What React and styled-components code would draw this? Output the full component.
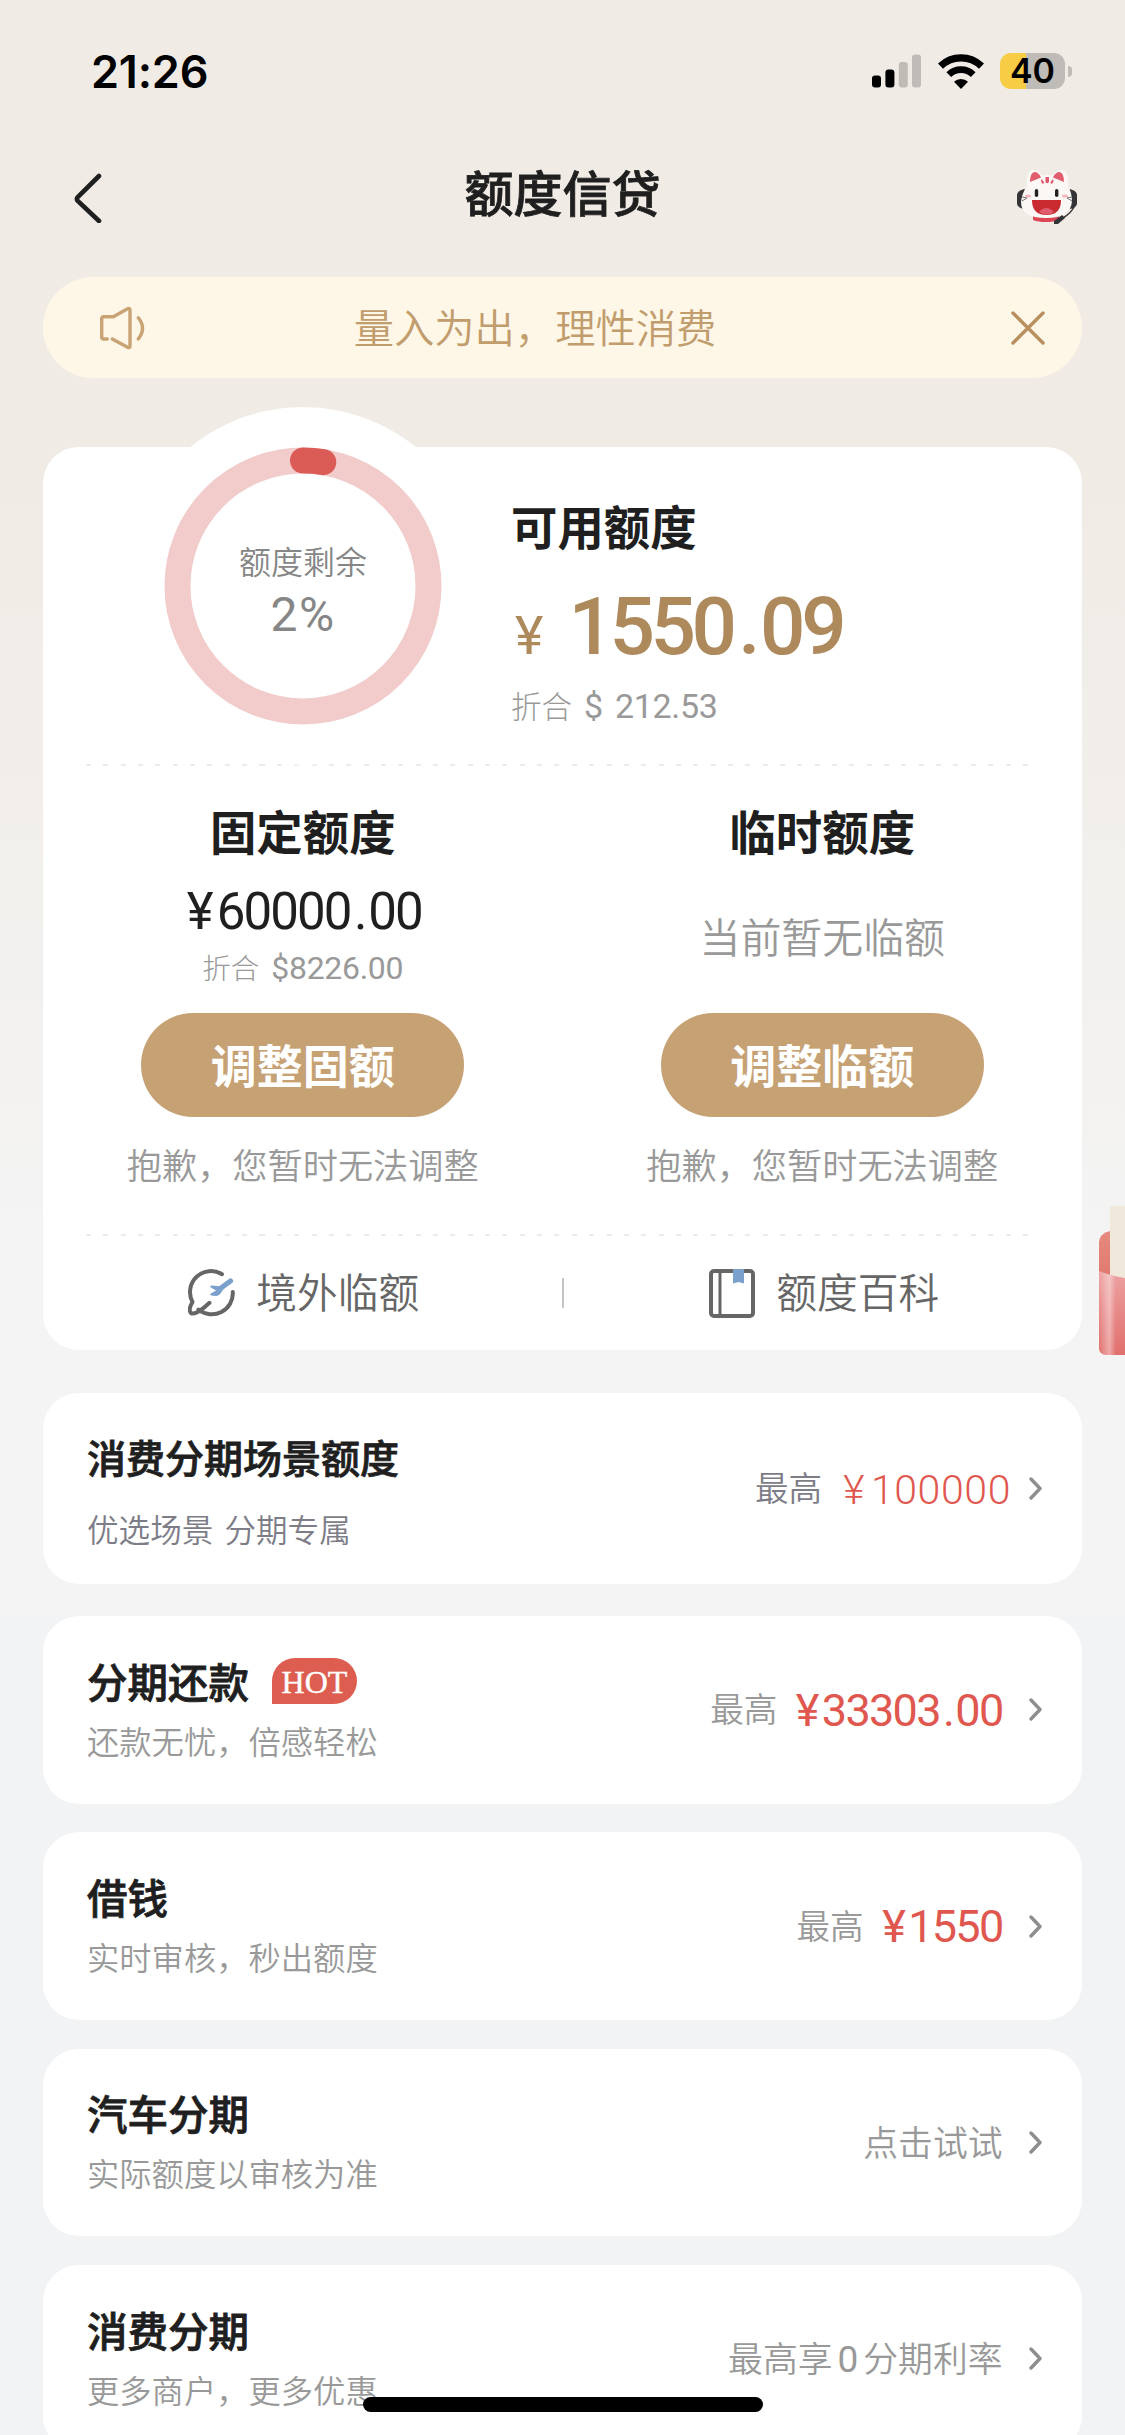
import { Fragment } from 'react';

import styled, { createGlobalStyle } from 'styled-components';

const GlobalStyle = createGlobalStyle`
  * {
    box-sizing: border-box;
  }

  body {
    margin: 0;
    background: #f2f3f5;
    font-family: 'Noto Sans CJK SC', sans-serif;
    font-weight: 350;
  }
`;

const Screen = styled.div`
  position: relative;
  width: 1125px;
  height: 2435px;
  overflow: hidden;
  background: linear-gradient(#f0ebe5 0, #f0ebe5 500px, #f4f4f4 1250px, #f4f4f4 1616px, #f2f3f5 1616px);
`;

const StatusBar = styled.div`
  display: flex;
  align-items: center;
  justify-content: space-between;
  height: 144px;
  padding: 0 53px 2px 91px;
`;

const Clock = styled.span`
  font: 600 45px/1 Inter, sans-serif;
  letter-spacing: -0.2px;
  color: #000;
`;

const StatusIcons = styled.div`
  display: flex;
  align-items: center;
  height: 36px;
`;

const WifiSlot = styled.span`
  display: flex;
  margin-left: 16px;
`;

const Battery = styled.div`
  display: flex;
  align-items: center;
  justify-content: center;
  width: 65px;
  height: 36px;
  margin-left: 15px;
  border-radius: 11px;
  background: linear-gradient(90deg, #f7cd46 40%, #bfbcb7 40%);
  font: 600 34px/1 Inter, sans-serif;
  color: #000;
`;

const BatteryCap = styled.i`
  width: 4px;
  height: 11px;
  margin-left: 3px;
  border-radius: 0 5px 5px 0;
  background: #bfbcb7;
`;

const NavBar = styled.header`
  display: grid;
  grid-template-columns: 60px 1fr 60px;
  align-items: center;
  height: 106px;
  margin-bottom: 27px;
  padding: 0 48px 0 74px;
  svg {
    display: block;
  }
`;

const NavTitle = styled.h1`
  margin: -12px 0 0 0;
  padding-right: 26px;
  text-align: center;
  font-size: 49px;
  line-height: 60px;
  font-weight: 500;
  color: #1f1f1f;
  -webkit-text-stroke: 0.8px #1f1f1f;
`;

const Notice = styled.div`
  display: flex;
  align-items: center;
  justify-content: space-between;
  height: 101px;
  margin: 0 43px 69px;
  padding: 0 37px 0 56px;
  border-radius: 51px;
  background: #fef7e8;
  font-size: 40.3px;
  color: #c19c6c;
`;

const NoticeText = styled.span`
  margin: 0 88px 4px 0;
`;

const QuotaCard = styled.section`
  position: relative;
  display: flex;
  flex-direction: column;
  height: 903px;
  margin: 0 43px 43px;
  border-radius: 36px;
  background: #fff;
`;

const Overview = styled.div`
  display: grid;
  grid-template-columns: 468px 1fr;
  height: 317px;
`;

const GaugeWrap = styled.div`
  position: relative;
  display: flex;
  flex-direction: column;
  align-items: center;
  justify-content: center;
  width: 358px;
  height: 358px;
  margin: -40px 0 0 81px;
  border-radius: 50%;
  background: #fff;
  svg {
    position: absolute;
    inset: 0;
  }
`;

const GaugeLabel = styled.span`
  margin-top: 6px;
  font-size: 32px;
  line-height: 48px;
  color: #868686;
`;

const GaugeValue = styled.span`
  margin-top: 3px;
  font: 400 48px/56px Roboto, sans-serif;
  letter-spacing: 1.5px;
  color: #868686;
`;

const Available = styled.div`
  display: flex;
  flex-direction: column;
  padding-top: 47px;
`;

const Heading = styled.h2`
  margin: 0;
  font-size: 46.4px;
  line-height: 62px;
  font-weight: 700;
  color: #1f1f1f;
`;

const Dot = styled.span`
  margin: 0 0.05em 0 0.07em;
`;

const BigAmount = styled.div`
  display: flex;
  align-items: baseline;
  height: 94px;
  margin-top: 24px;
  padding-left: 4px;
  gap: 25px;
  font: 500 80px/94px Roboto, sans-serif;
  letter-spacing: -4.4px;
  color: #ad895c;
  small {
    font-size: 54px;
    font-weight: 400;
    letter-spacing: 0;
  }
`;

const Converted = styled.div`
  display: flex;
  align-items: baseline;
  margin-top: ${({ $top }) => $top}px;
  gap: ${({ $gap }) => $gap}px;
  font-size: ${({ $size }) => $size}px;
  line-height: 44px;
  font-weight: 300;
  color: #999;
  span {
    font: 400 ${({ $size }) => $size + 3.5}px/44px Roboto, sans-serif;
    letter-spacing: -0.3px;
    word-spacing: ${({ $wordGap = 0 }) => $wordGap}px;
  }
`;

const DashedLine = styled.div`
  flex: none;
  height: 2px;
  margin: 0 52px 1px 43px;
  background: repeating-linear-gradient(90deg, #ebebeb 0 5px, transparent 5px 17.35px);
`;

const Columns = styled.div`
  display: grid;
  grid-template-columns: 1fr 1fr;
  height: 467px;
`;

const Column = styled.div`
  display: flex;
  flex-direction: column;
  align-items: center;
  padding-top: 32px;
`;

const ColumnBody = styled.div`
  display: flex;
  flex-direction: column;
  align-items: center;
  height: 152px;
  padding-top: ${({ $empty }) => ($empty ? 46 : 22)}px;
  font-size: 40.9px;
  line-height: 58px;
  color: #999;
`;

const FixedAmount = styled.div`
  margin: 0 0 4px 3px;
  font: 400 51px/58px Roboto, sans-serif;
  letter-spacing: -1.9px;
  color: #1f1f1f;
  i {
    margin-right: 5px;
    font-style: normal;
  }
`;

const AdjustButton = styled.button`
  width: 323px;
  height: 104px;
  padding: 0 0 4px;
  border: none;
  border-radius: 52px;
  background: #c6a174;
  font: 700 46px/98px 'Noto Sans CJK SC', sans-serif;
  color: #fff;
`;

const Hint = styled.p`
  margin: 22px 0 0;
  font-size: 35.2px;
  line-height: 50px;
  color: #999;
`;

const Links = styled.div`
  display: grid;
  grid-template-columns: 1fr 2px 1fr;
  align-items: center;
  height: 112px;
`;

const LinkItem = styled.a`
  display: flex;
  align-items: center;
  justify-content: center;
  padding-left: 3px;
  gap: ${({ $gap }) => $gap}px;
  font-size: 40.7px;
  line-height: 56px;
  color: #666;
  span {
    margin-bottom: 5px;
  }
`;

const Divider = styled.i`
  width: 2px;
  height: 30px;
  background: #c4c4c4;
`;

const ProductCard = styled.section`
  display: flex;
  align-items: center;
  justify-content: space-between;
  height: ${({ $height }) => $height}px;
  margin: 0 43px ${({ $after }) => $after}px;
  padding: 0 40px 0 44px;
  border-radius: 36px;
  background: #fff;
`;

const ProductInfo = styled.div`
  display: flex;
  flex-direction: column;
  padding-bottom: ${({ $bottom }) => $bottom}px;
  gap: ${({ $gap }) => $gap}px;
`;

const ProductTitle = styled.h3`
  display: flex;
  align-items: center;
  gap: 23px;
  height: 56px;
  margin: 0;
  font-size: ${({ $size }) => $size}px;
  line-height: 56px;
  font-weight: 500;
  color: #1f1f1f;
  -webkit-text-stroke: 0.8px #1f1f1f;
`;

const HotBadge = styled.span`
  width: 85px;
  height: 46px;
  border-radius: 23px 23px 23px 0;
  background: #dd5e50;
  text-align: center;
  font: 400 32px/48px 'Liberation Serif', serif;
  color: #fff;
  -webkit-text-stroke: 0.4px #fff;
`;

const ProductDesc = styled.p`
  margin: 0;
  font-size: ${({ $size }) => $size}px;
  line-height: 44px;
  word-spacing: 4px;
  color: ${({ $color }) => $color};
`;

const ProductValue = styled.div`
  display: flex;
  align-items: center;
  font-size: ${({ $size }) => $size}px;
  line-height: 50px;
  color: ${({ $color }) => $color};
  svg {
    margin-left: ${({ $chevronGap }) => $chevronGap}px;
  }
`;

const ValueLabel = styled.span`
  margin-bottom: 3px;
`;

const Rate = styled.span`
  margin: 0 5px;
  font: 400 37px Roboto, sans-serif;
`;

const Amount = styled.b`
  margin: 2px 0 0 ${({ $left }) => $left}px;
  font: ${({ $weight }) => $weight} ${({ $size }) => $size}px/50px Roboto, sans-serif;
  letter-spacing: ${({ $spacing }) => $spacing}px;
  color: #e0574f;
  i {
    margin-right: ${({ $gap }) => $gap}px;
    font-style: normal;
  }
`;

const FloatingGift = styled.div`
  position: absolute;
  top: 1206px;
  right: 0;
  width: 26px;
  height: 150px;
`;

const HomeIndicator = styled.div`
  position: absolute;
  left: 363px;
  bottom: 23px;
  width: 400px;
  height: 15px;
  border-radius: 8px;
  background: #000;
`;

const products = [
  {
    title: '消费分期场景额度',
    desc: '优选场景 分期专属',
    label: '最高',
    amount: '100000',
    scene: true,
  },
  { title: '分期还款', hot: true, desc: '还款无忧，倍感轻松', label: '最高', amount: '33303.00' },
  { title: '借钱', desc: '实时审核，秒出额度', label: '最高', amount: '1550' },
  { title: '汽车分期', desc: '实际额度以审核为准', label: '点击试试' },
  {
    title: '消费分期',
    desc: '更多商户，更多优惠',
    label: (
      <>
        最高享<Rate>0</Rate>分期利率
      </>
    ),
  },
];

const SignalIcon = () => (
  <svg width="49" height="34" viewBox="0 0 49 34">
    <rect x="0" y="21.5" width="9" height="12" rx="3" fill="#000" />
    <rect x="13.4" y="15.5" width="9" height="18" rx="3" fill="#000" />
    <rect x="26.8" y="8" width="9" height="25.5" rx="3" fill="#bfbcb7" />
    <rect x="40" y="0.5" width="9" height="33" rx="3" fill="#bfbcb7" />
  </svg>
);

const WifiIcon = () => (
  <svg width="48" height="35" viewBox="0 0 48 35">
    <path d="M3.5 12.2a29.5 29.5 0 0 1 41 0" fill="none" stroke="#000" strokeWidth="7.2" />
    <path d="M11.8 20.6a17.6 17.6 0 0 1 24.4 0" fill="none" stroke="#000" strokeWidth="6.8" />
    <path d="M24 35l-7-7.2a10.2 10.2 0 0 1 14 0z" fill="#000" />
  </svg>
);

const BackIcon = () => (
  <svg width="28" height="52" viewBox="0 0 28 52">
    <path d="M25 5L3.500 26.400a2.300 2.300 0 0 0 0 3.200L25 50" fill="none" stroke="#1f1f1f" strokeWidth="4.6" strokeLinecap="round" />
  </svg>
);

const MascotIcon = () => (
  <svg width="60" height="54" viewBox="0 0 60 54">
    <path d="M7 19Q0 21 0 25v9q1 4 7 5l3-4V20z" fill="#343436" />
    <path d="M53 19q7 2 7 6v9q-1 4-7 5l-3-4V20z" fill="#343436" />
    <path d="M16 46h26v4q-5 2-13 2t-13-2z" fill="#dc4655" />
    <path
      d="M10 16Q9 0 16 0q6 0 9 5.500Q30.500 4.500 36 5.500 39 0 45 0q7 0 6 16 4 7 4 15-1 17-26 17T4 32q1-9 6-16z"
      fill="#fbf7f5"
    />
    <path d="M13 12q0-9 4.500-10 4 0 6.500 5.500zM47 12q0-9-4.500-10-4 0-6.500 5.500z" fill="#e15c6c" />
    <path d="M28.500 7h3.500v5q-2 2.500-3.500 0zM24.500 9l2.500 3-.5 2q-3.500-1-2-5zM36 9l-2.500 3 .5 2q3.500-1 2-5z" fill="#e0566a" />
    <rect x="17.8" y="19" width="3.4" height="8" rx="1.700" fill="#222" />
    <rect x="38" y="19" width="3.4" height="8" rx="1.700" fill="#222" />
    <ellipse cx="11" cy="26" rx="3" ry="1.500" fill="#f6b5bd" />
    <ellipse cx="48" cy="26" rx="3" ry="1.500" fill="#f6b5bd" />
    <path d="M5 27l5 1-5 3M55 27l-5 1 5 3" fill="none" stroke="#777" strokeWidth="1" />
    <path d="M15 30h29q0 15-14.500 15T15 30z" fill="#c92a30" />
    <path d="M22 42q7-8 15 0-7 5-15 0z" fill="#df5c6e" />
    <path d="M57 37q-3 6-11 11" fill="none" stroke="#343436" strokeWidth="1.500" />
    <path d="M37 51l8-6 3 3-7 6h-4z" fill="#343436" />
  </svg>
);

const SpeakerIcon = () => (
  <svg width="48" height="44" viewBox="0 0 48 44" fill="none" stroke="#c9a374" strokeWidth="3.4" strokeLinecap="round">
    <path d="M8.300 33H4.500a1.800 1.800 0 0 1-1.800-1.800V12.500a1.800 1.800 0 0 1 1.800-1.800h9.800L28.600 2.800Q31 1.500 31 4v36q0 2.500-2.400 1.200L13.300 33" />
    <path d="M39.300 11.700q8.500 10.500 0 21.300" />
  </svg>
);

const CloseIcon = () => (
  <svg width="34" height="34" viewBox="0 0 34 34">
    <path d="M2 2l30 30M32 2L2 32" stroke="#b8905f" strokeWidth="3.5" strokeLinecap="round" />
  </svg>
);

const PlaneIcon = () => (
  <svg width="48" height="48" viewBox="0 0 48 48" fill="none" strokeLinecap="round" strokeLinejoin="round">
    <path
      d="M34 5.200A21 21 0 0 0 4.500 33C1.500 38 1 42 3 44 6.500 46.500 15 40 21.500 33.800M10.500 40.500A21 21 0 0 0 44.800 23"
      stroke="#666"
      strokeWidth="4"
    />
    <path d="M42.500 12L31 20.500" stroke="#7ca0cc" strokeWidth="5.2" />
    <path d="M23.300 17.600l9 .6 4-1-5 7.300-3 1.500-5-.6 6.700-3.900z" fill="#7ca0cc" stroke="#7ca0cc" strokeWidth="2" />
  </svg>
);

const BookIcon = () => (
  <svg width="46" height="49" viewBox="0 0 46 49">
    <rect x="2" y="2" width="42" height="45" rx="3" fill="none" stroke="#666" strokeWidth="4" />
    <path d="M11 2v45" stroke="#666" strokeWidth="3" />
    <path d="M24 0h11v14.500l-5.500-1.500-5.500 1.500z" fill="#7ca0cc" />
  </svg>
);

const ChevronIcon = () => (
  <svg width="13" height="23" viewBox="0 0 13 23">
    <path d="M2 2l9 9.500L2 21" fill="none" stroke="#8e8e8e" strokeWidth="3.4" strokeLinecap="round" strokeLinejoin="round" />
  </svg>
);

const GiftIcon = () => (
  <svg width="26" height="150" viewBox="0 0 26 150">
    <defs>
      <linearGradient id="flap" x1="0" y1="0" x2="0" y2="1">
        <stop offset="0" stopColor="#e58a80" />
        <stop offset="1" stopColor="#e07468" />
      </linearGradient>
      <linearGradient id="front" x1="0" y1="0" x2="0" y2="1">
        <stop offset="0" stopColor="#eda2a2" />
        <stop offset="1" stopColor="#e06f6c" />
      </linearGradient>
      <linearGradient id="shine" x1="0" y1="0" x2="1" y2="0">
        <stop offset="0" stopColor="#fff" stopOpacity="0" />
        <stop offset="0.4" stopColor="#fff" stopOpacity="0.4" />
        <stop offset="0.65" stopColor="#fff" stopOpacity="0" />
      </linearGradient>
    </defs>
    <path d="M0 36q1-9 11-11h15v60H0z" fill="url(#flap)" />
    <path d="M11 2q0-2 2-2h13v80H11z" fill="#f1e8dc" />
    <path d="M0 65q12 5 26 7v77H7q-7-1-7-7z" fill="url(#front)" />
    <path d="M0 65q12 5 26 7v77H7q-7-1-7-7z" fill="url(#shine)" />
  </svg>
);

// widens the decimal point a little
function Digits({ value }) {
  return value.split('.').map((part, index) => (
    <Fragment key={index}>
      {index > 0 && <Dot>.</Dot>}
      {part}
    </Fragment>
  ));
}

function Gauge({ percent, label, value }) {
  const circumference = 2 * Math.PI * 125.5;

  return (
    <GaugeWrap>
      <svg width="358" height="358" viewBox="0 0 358 358" fill="none" strokeWidth="26">
        <circle cx="179" cy="179" r="125.5" stroke="#f2cbcb" />
        <circle
          cx="179"
          cy="179"
          r="125.5"
          stroke="#db5b56"
          strokeLinecap="round"
          strokeDasharray={`${(circumference * percent) / 100} ${circumference}`}
          transform="rotate(-90 179 179)"
        />
      </svg>
      <GaugeLabel>{label}</GaugeLabel>
      <GaugeValue>{value}</GaugeValue>
    </GaugeWrap>
  );
}

function Product({ title, desc, label, amount, hot, scene }) {
  const gray = scene ? '#7d7d88' : '#999';

  return (
    <ProductCard $height={scene ? 191 : 187.5} $after={scene ? 32 : 28.8}>
      <ProductInfo $gap={scene ? 22 : 9} $bottom={scene ? 0 : 5}>
        <ProductTitle $size={scene ? 39 : 40.5}>
          {title}
          {hot && <HotBadge>HOT</HotBadge>}
        </ProductTitle>
        <ProductDesc $size={scene ? 31.6 : 32.3} $color={gray}>
          {desc}
        </ProductDesc>
      </ProductInfo>
      <ProductValue $size={amount ? 33.6 : 34.8} $color={gray} $chevronGap={scene ? 18 : 26.5}>
        <ValueLabel>{label}</ValueLabel>
        {amount && (
          <Amount
            $size={scene ? 41 : 45}
            $weight={scene ? 300 : 400}
            $spacing={scene ? 0.6 : -1.7}
            $gap={scene ? 6 : 4}
            $left={scene ? 21 : 18.5}
          >
            <i>¥</i>
            <Digits value={amount} />
          </Amount>
        )}
        <ChevronIcon />
      </ProductValue>
    </ProductCard>
  );
}

function App() {
  return (
    <Screen>
      <GlobalStyle />
      <StatusBar>
        <Clock>21:26</Clock>
        <StatusIcons>
          <SignalIcon />
          <WifiSlot>
            <WifiIcon />
          </WifiSlot>
          <Battery>40</Battery>
          <BatteryCap />
        </StatusIcons>
      </StatusBar>
      <NavBar>
        <BackIcon />
        <NavTitle>额度信贷</NavTitle>
        <MascotIcon />
      </NavBar>
      <Notice>
        <SpeakerIcon />
        <NoticeText>量入为出，理性消费</NoticeText>
        <CloseIcon />
      </Notice>
      <QuotaCard>
        <Overview>
          <Gauge percent={2.58} label="额度剩余" value="2%" />
          <Available>
            <Heading>可用额度</Heading>
            <BigAmount>
              <small>¥</small>
              <span>
                <Digits value="1550.09" />
              </span>
            </BigAmount>
            <Converted $size={30.5} $gap={12} $top={9} $wordGap={4}>
              折合<span>$ 212.53</span>
            </Converted>
          </Available>
        </Overview>
        <DashedLine />
        <Columns>
          <Column>
            <Heading>固定额度</Heading>
            <ColumnBody>
              <FixedAmount>
                <i>¥</i>
                <Digits value="60000.00" />
              </FixedAmount>
              <Converted $size={28.5} $gap={12} $top={0}>
                折合<span>$8226.00</span>
              </Converted>
            </ColumnBody>
            <AdjustButton>调整固额</AdjustButton>
            <Hint>抱歉，您暂时无法调整</Hint>
          </Column>
          <Column>
            <Heading>临时额度</Heading>
            <ColumnBody $empty>当前暂无临额</ColumnBody>
            <AdjustButton>调整临额</AdjustButton>
            <Hint>抱歉，您暂时无法调整</Hint>
          </Column>
        </Columns>
        <DashedLine />
        <Links>
          <LinkItem $gap={20}>
            <PlaneIcon />
            <span>境外临额</span>
          </LinkItem>
          <Divider />
          <LinkItem $gap={21}>
            <BookIcon />
            <span>额度百科</span>
          </LinkItem>
        </Links>
      </QuotaCard>
      {products.map((item) => (
        <Product key={item.title} {...item} />
      ))}
      <FloatingGift>
        <GiftIcon />
      </FloatingGift>
      <HomeIndicator />
    </Screen>
  );
}

export default App;
